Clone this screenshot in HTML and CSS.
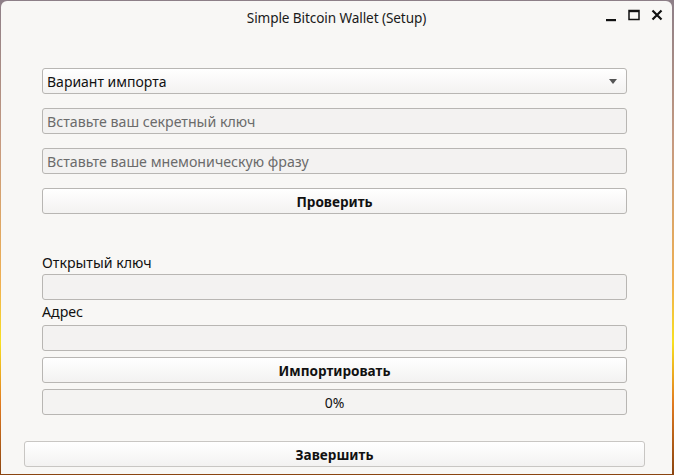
FILE: index.html
```html
<!DOCTYPE html>
<html>
<head>
<meta charset="utf-8">
<link rel="stylesheet" href="styles.css">
</head>
<body>
<div class="window">
  <div class="titlebar">
    <div class="title">Simple Bitcoin Wallet (Setup)</div>
    <div class="controls">
      <svg class="ctl" width="14" height="14" viewBox="0 0 14 14"><rect x="2" y="11" width="10" height="2.2" fill="#111"/></svg>
      <svg class="ctl" width="14" height="14" viewBox="0 0 14 14"><rect x="2" y="2.5" width="10" height="9" fill="none" stroke="#111" stroke-width="1.5"/><rect x="2" y="2" width="10" height="2.2" fill="#111"/></svg>
      <svg class="ctl" width="14" height="14" viewBox="0 0 14 14"><path d="M2.5 2.5 L11.5 11.5 M11.5 2.5 L2.5 11.5" stroke="#111" stroke-width="2.2"/></svg>
    </div>
  </div>
  <div class="form">
    <div class="combo"><span>Вариант импорта</span><span class="arrow"></span></div>
    <div class="field gap14 placeholder">Вставьте ваш секретный ключ</div>
    <div class="field gap14 placeholder">Вставьте ваше мнемоническую фразу</div>
    <div class="button gap14">Проверить</div>
    <div class="label first">Открытый ключ</div>
    <div class="field"></div>
    <div class="label second">Адрес</div>
    <div class="field"></div>
    <div class="button gap6">Импортировать</div>
    <div class="progress gap6">0%</div>
  </div>
  <div class="footer">
    <div class="button finish">Завершить</div>
  </div>
</div>
</body>
</html>
```
FILE: styles.css
```css
html, body {
  margin: 0;
  padding: 0;
  height: 475px;
  overflow: hidden;
}
body {
  background: linear-gradient(180deg, #8d7f88 0%, #c69a80 30%, #f0b050 60%, #f8e020 72%, #e07a20 85%, #8a4410 100%);
  font-family: "Noto Sans", "Open Sans", sans-serif;
  color: #111;
  font-size: 14px;
}
.window {
  margin: 1px 2px 0 1px;
  height: 473px;
  background: #f8f7f5;
  border-radius: 6px 6px 0 0;
  display: flex;
  flex-direction: column;
}
.titlebar {
  height: 35px;
  position: relative;
  display: flex;
  align-items: center;
  justify-content: center;
}
.title {
  font-size: 13.6px;
  color: #1a1a1a;
  margin-top: -3px;
  letter-spacing: -0.1px;
}
.controls {
  position: absolute;
  right: 8px;
  top: 7px;
  display: flex;
  gap: 9px;
}
.form {
  padding: 32px 45px 0 41px;
  display: flex;
  flex-direction: column;
}
.combo, .field, .button, .progress {
  height: 26px;
  box-sizing: border-box;
  border: 1px solid #b8b6b3;
  border-radius: 3px;
}
.combo {
  background: linear-gradient(180deg, #ffffff, #f3f2f1);
  display: flex;
  align-items: center;
  justify-content: space-between;
  padding: 0 9px 0 4px;
}
.arrow {
  width: 0;
  height: 0;
  border-left: 4px solid transparent;
  border-right: 4px solid transparent;
  border-top: 5px solid #555;
}
.field {
  background: #f3f2f1;
  display: flex;
  align-items: center;
  padding: 0 4px;
}
.placeholder {
  color: #6b6b6b;
  font-size: 14.2px;
}
.button {
  background: linear-gradient(180deg, #ffffff, #f3f2f1);
  display: flex;
  align-items: center;
  justify-content: center;
  font-weight: bold;
  font-size: 13.6px;
}
.progress {
  background: #f4f3f2;
  display: flex;
  align-items: center;
  justify-content: center;
  font-size: 14px;
}
.gap14 { margin-top: 14px; }
.gap6 { margin-top: 6px; }
.label {
  height: 20px;
  display: flex;
  align-items: center;
  font-size: 14.2px;
}
.label.first { margin-top: 38px; margin-bottom: 2px; }
.label.second { height: 23px; margin-bottom: 2px; }
.footer {
  margin-top: 26px;
  padding: 0 27px 0 23px;
}
.button.finish {
  border-color: #c8c6c3;
}
```
